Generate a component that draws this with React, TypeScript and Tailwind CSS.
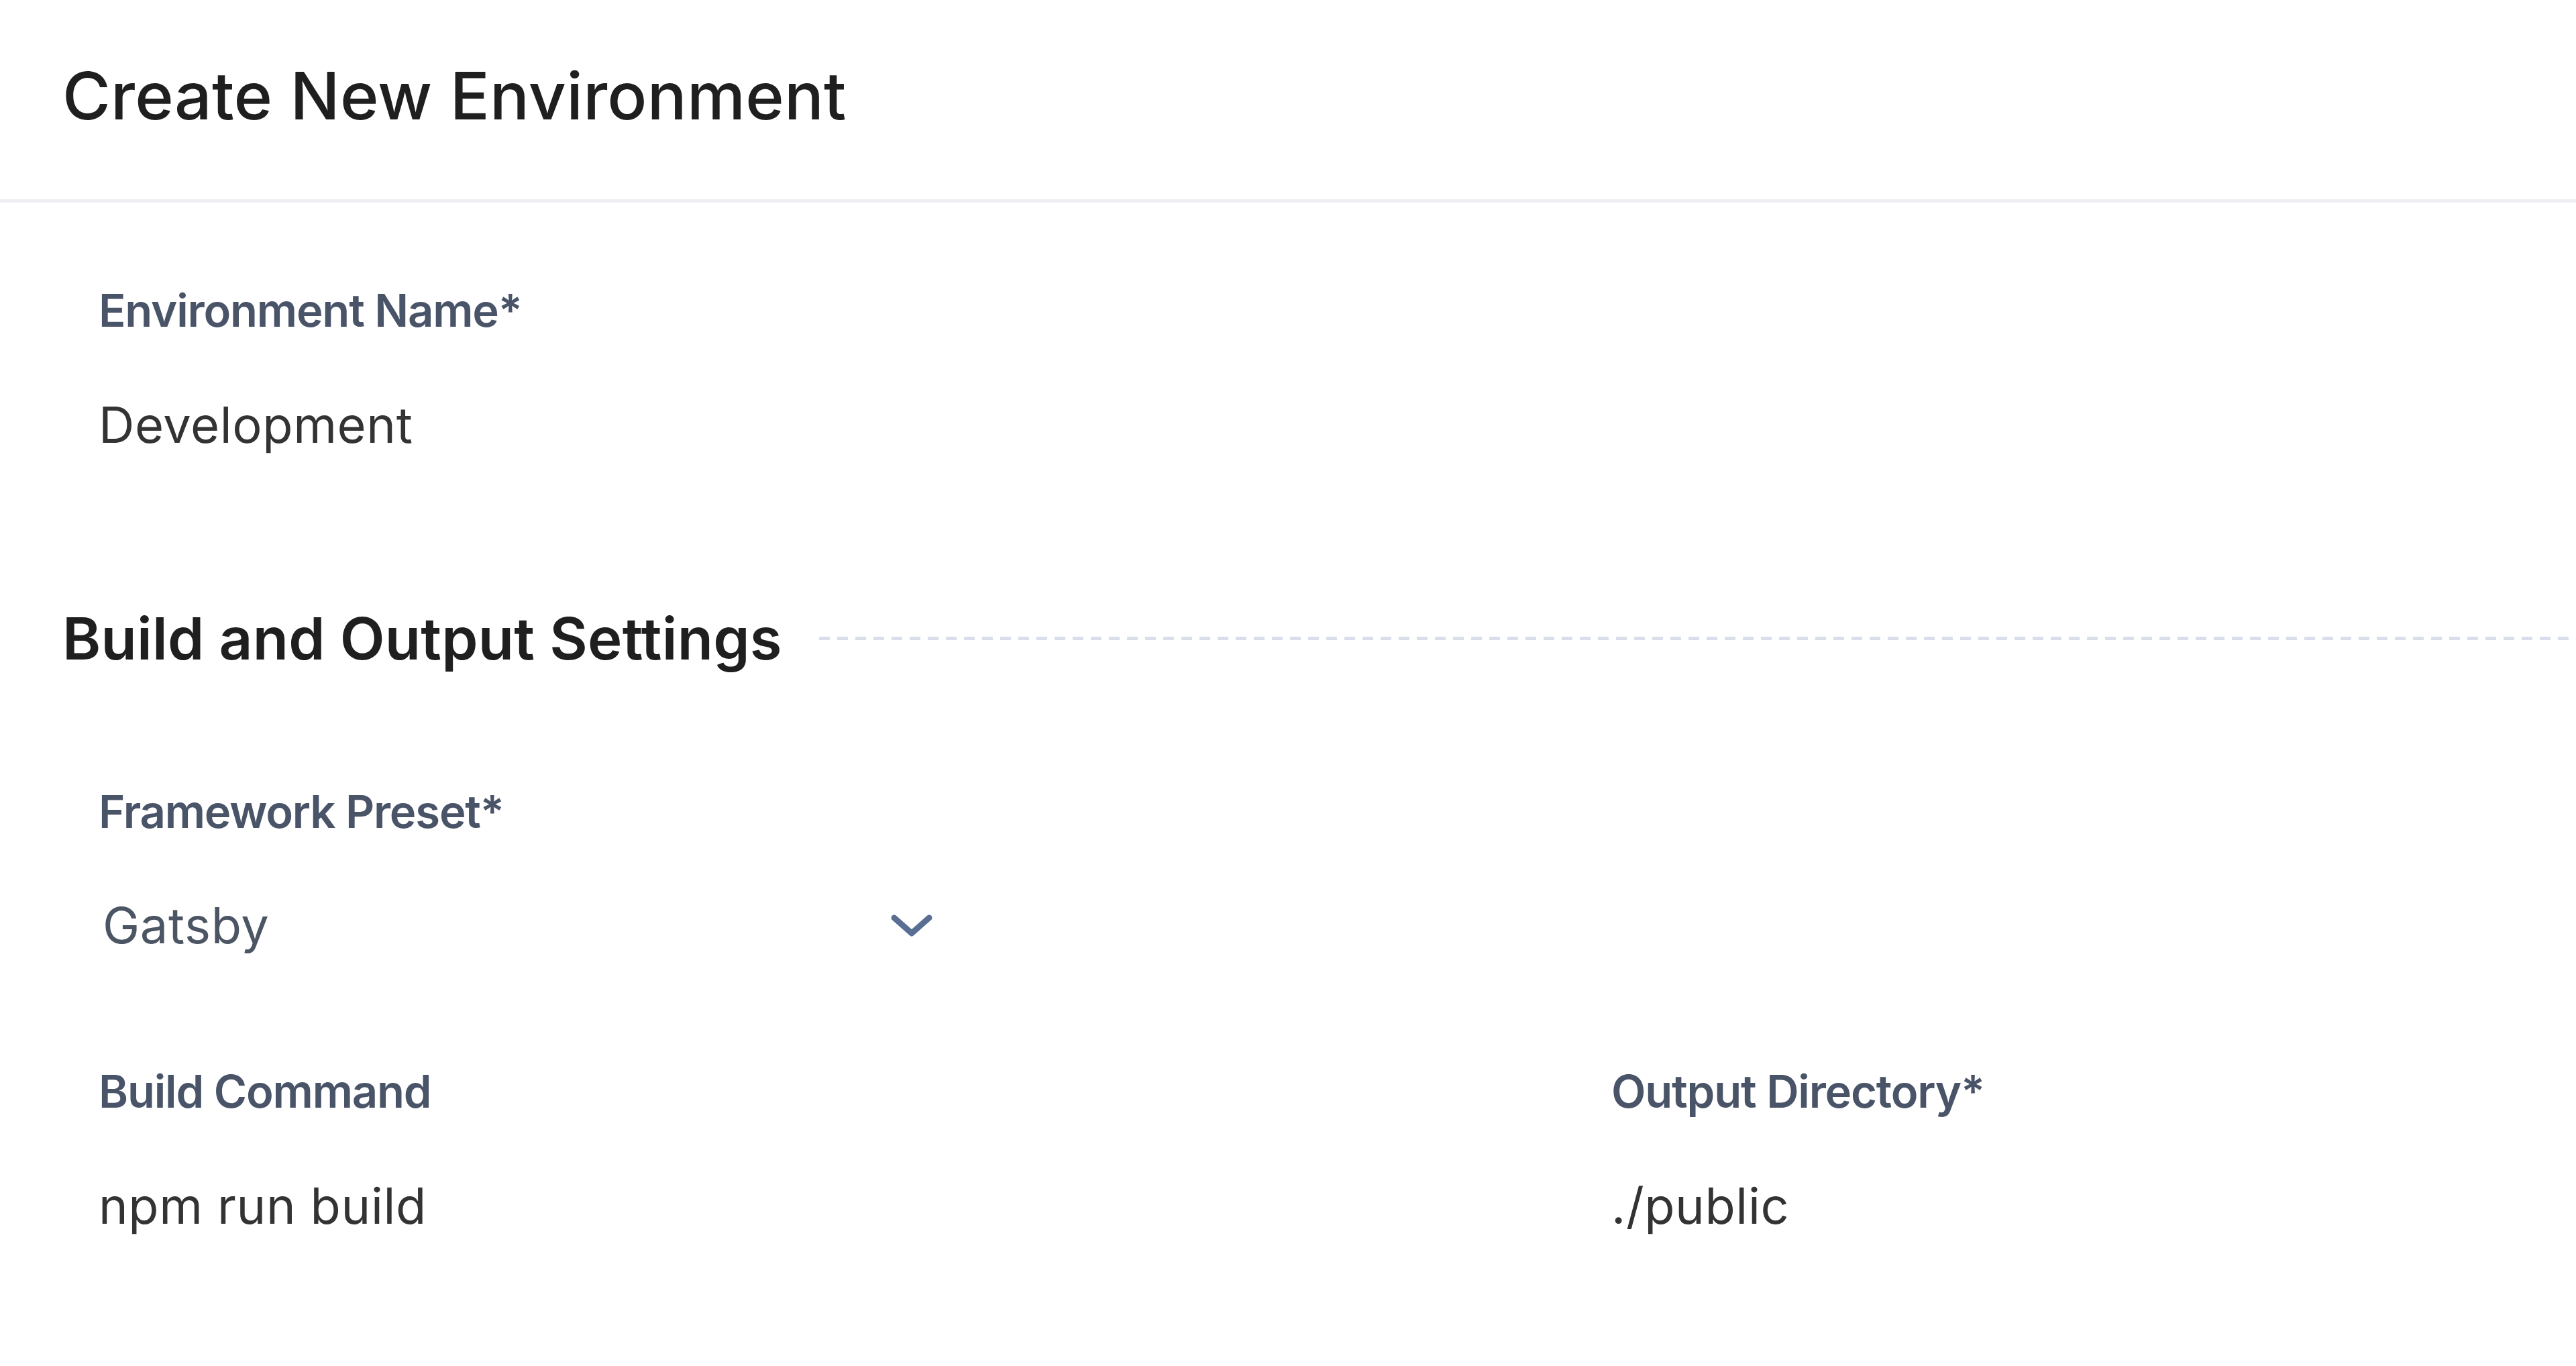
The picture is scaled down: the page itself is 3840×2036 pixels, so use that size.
import { useState } from "react";

// Chevron drawn at the right of the preset picker
function Chevron() {
  return (
    <svg width="62" height="33" viewBox="0 0 62 33" fill="none">
      <polyline
        points="5,5 31,28 57,5"
        stroke="#5a6e93"
        strokeWidth="9"
        strokeLinecap="round"
        strokeLinejoin="round"
      />
    </svg>
  );
}

function Label({ children }: { children: React.ReactNode }) {
  return (
    <label className="block text-[67px] leading-[81px] font-semibold text-[#4a5468] tracking-[-1.2px]">
      {children}
    </label>
  );
}

function TextField({ label, value }: { label: string; value: string }) {
  const [val, setVal] = useState(value);
  return (
    <div className="flex flex-col gap-[85px]">
      <Label>{label}</Label>
      <input
        value={val}
        onChange={(e) => setVal(e.target.value)}
        className="block w-full h-[90px] p-0 bg-transparent outline-none text-[74px] leading-[90px] text-[#333333] tracking-[0.6px]"
      />
    </div>
  );
}

export default function App() {
  return (
    <div className="min-h-screen bg-white font-['Inter','Liberation_Sans',sans-serif]">
      {/* Header */}
      <header className="h-[302px] border-b-[5px] border-[#eef0f5] pt-[83px] pl-[93px]">
        <h1 className="text-[98px] leading-[119px] font-medium text-[#1f1f1f] tracking-[0.2px]">
          Create New Environment
        </h1>
      </header>

      {/* Environment name */}
      <div className="pt-[120px] pl-[147px] w-[2255px]">
        <TextField label="Environment Name*" value="Development" />
      </div>

      {/* Section heading with dashed rule */}
      <div className="flex items-center gap-[55px] pl-[93px] mt-[221px]">
        <h2 className="text-[87px] leading-[105px] font-semibold text-[#1f1f1f] tracking-[0.2px] whitespace-nowrap">
          Build and Output Settings
        </h2>
        <div className="flex-1 h-[5px] bg-[repeating-linear-gradient(90deg,#d9deea_0px,#d9deea_16px,transparent_16px,transparent_27px)]" />
      </div>

      <div className="pl-[147px] pt-[165px] flex flex-col gap-[162px]">
        {/* Framework preset */}
        <div className="flex flex-col gap-[84px]">
          <Label>Framework Preset*</Label>
          <button className="flex items-center justify-between w-[1270px] h-[90px] pl-[6px] pr-[27px] text-left">
            <span className="text-[74px] leading-[90px] text-[#4b5563] tracking-[0.6px]">Gatsby</span>
            <Chevron />
          </button>
        </div>

        {/* Build command / output directory */}
        <div className="grid grid-cols-[2255px_1fr]">
          <TextField label="Build Command" value="npm run build" />
          <TextField label="Output Directory*" value="./public" />
        </div>
      </div>
    </div>
  );
}
